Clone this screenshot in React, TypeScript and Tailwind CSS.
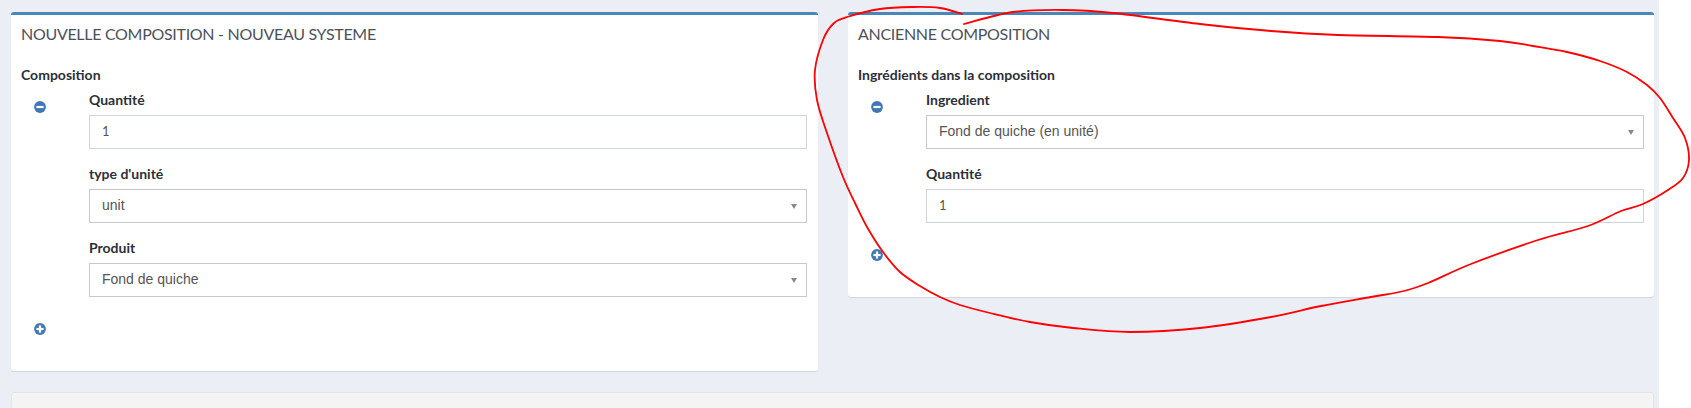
const scribble: [number, number][] = [
  [962, 14], [940, 8], [913, 7], [880, 9], [847, 17], [833, 24], [823, 40], [815, 70], [817, 100],
  [827, 133], [843, 177], [855, 203], [867, 227], [883, 252], [900, 272], [920, 286], [940, 297],
  [960, 305], [990, 313], [1030, 322], [1073, 328], [1130, 332], [1200, 328], [1271, 317], [1321, 306],
  [1371, 297], [1404, 291], [1428, 283], [1471, 264], [1538, 240], [1588, 226], [1621, 211], [1643, 204],
  [1668, 190], [1683, 178], [1689, 160], [1685, 138], [1673, 118], [1660, 98], [1647, 85], [1627, 72],
  [1600, 61], [1567, 52], [1533, 46], [1500, 41], [1438, 37], [1338, 35], [1271, 31], [1200, 24],
  [1113, 13], [1063, 10], [1013, 12], [964, 24],
];

// catmull-rom through the traced points
function smoothPath(pts: [number, number][]) {
  let d = `M${pts[0][0]} ${pts[0][1]}`;
  for (let i = 0; i < pts.length - 1; i++) {
    const p0 = pts[Math.max(i - 1, 0)];
    const p1 = pts[i];
    const p2 = pts[i + 1];
    const p3 = pts[Math.min(i + 2, pts.length - 1)];
    d += ` C${p1[0] + (p2[0] - p0[0]) / 6} ${p1[1] + (p2[1] - p0[1]) / 6} ${p2[0] - (p3[0] - p1[0]) / 6} ${p2[1] - (p3[1] - p1[1]) / 6} ${p2[0]} ${p2[1]}`;
  }
  return d;
}

function CircleIcon({ plus }: { plus?: boolean }) {
  return (
    <svg width="12" height="12" viewBox="0 0 12 12" className="block">
      <circle cx="6" cy="6" r="5.9" fill="#3f78b5" />
      <rect x="2.4" y="4.9" width="7.2" height="2.2" fill="#fff" />
      {plus && <rect x="4.9" y="2.4" width="2.2" height="7.2" fill="#fff" />}
    </svg>
  );
}

function Label({ children }: { children: React.ReactNode }) {
  return <div className="h-[18px] mb-[6px] text-[14px] leading-[18px] font-bold text-[#2c3038]">{children}</div>;
}

function TextField({ label, value }: { label: string; value: string }) {
  return (
    <div>
      <Label>{label}</Label>
      <div className="h-[34px] border border-[#cfd3dc] px-[12px] flex items-center text-[13px] text-[#555]">{value}</div>
    </div>
  );
}

function SelectField({ label, value }: { label: string; value: string }) {
  return (
    <div>
      <Label>{label}</Label>
      <div className="h-[34px] border border-[#c9c9c9] pl-[12px] pr-[9px] flex items-center justify-between font-['Liberation_Sans',sans-serif] text-[14px] text-[#555]">
        <span className="-mt-[1px]">{value}</span>
        <span className="w-0 h-0 border-x-[3px] border-x-transparent border-t-[5px] border-t-[#888]" />
      </div>
    </div>
  );
}

function Panel({ title, children }: { title: string; children: React.ReactNode }) {
  return (
    <div className="bg-white rounded-[3px] border-t-[3px] border-[#4a86b8] shadow-[0_1px_1px_rgba(0,0,0,0.1)] pl-[10px]">
      <h2 className="pt-[6px] h-[36px] text-[16px] leading-[26px] tracking-[-0.3px] text-[#4d5259] uppercase">{title}</h2>
      {children}
    </div>
  );
}

export default function App() {
  return (
    <div className="relative w-[1691px] h-[408px] overflow-hidden bg-white font-['Lato',sans-serif]">
      <div className="w-[1659px] h-[408px] bg-[#ebeef4] pt-[12px] pl-[11px] pr-[5px]">
        <div className="grid grid-cols-[807px_806px] gap-[30px] items-start">
          <Panel title="Nouvelle composition - nouveau systeme">
            <div className="h-[320px] pr-[11px]">
              <div className="pt-[15px] text-[14px] leading-[18px] font-bold text-[#2c3038]">Composition</div>
              <div className="flex mt-[7px]">
                <div className="w-[68px] pl-[13px] pt-[10px]"><CircleIcon /></div>
                <div className="flex-1 flex flex-col gap-[16px]">
                  <TextField label="Quantité" value="1" />
                  <SelectField label="type d'unité" value="unit" />
                  <SelectField label="Produit" value="Fond de quiche" />
                </div>
              </div>
              <div className="pl-[13px] pt-[26px]"><CircleIcon plus /></div>
            </div>
          </Panel>
          <Panel title="Ancienne composition">
            <div className="h-[246px] pr-[10px]">
              <div className="pt-[15px] text-[14px] leading-[18px] font-bold text-[#2c3038]">Ingrédients dans la composition</div>
              <div className="flex mt-[7px]">
                <div className="w-[68px] pl-[13px] pt-[10px]"><CircleIcon /></div>
                <div className="flex-1 flex flex-col gap-[16px]">
                  <SelectField label="Ingredient" value="Fond de quiche (en unité)" />
                  <TextField label="Quantité" value="1" />
                </div>
              </div>
              <div className="pl-[13px] pt-[26px]"><CircleIcon plus /></div>
            </div>
          </Panel>
        </div>
        <div className="mt-[21px] h-[40px] rounded-[3px] bg-[#f4f4f5] border border-[#e4e5e8]" />
      </div>
      <svg width="1691" height="408" className="absolute inset-0 pointer-events-none" fill="none">
        <path d={smoothPath(scribble)} stroke="#ff0000" strokeWidth="1.8" strokeLinecap="round" strokeLinejoin="round" />
      </svg>
    </div>
  );
}
